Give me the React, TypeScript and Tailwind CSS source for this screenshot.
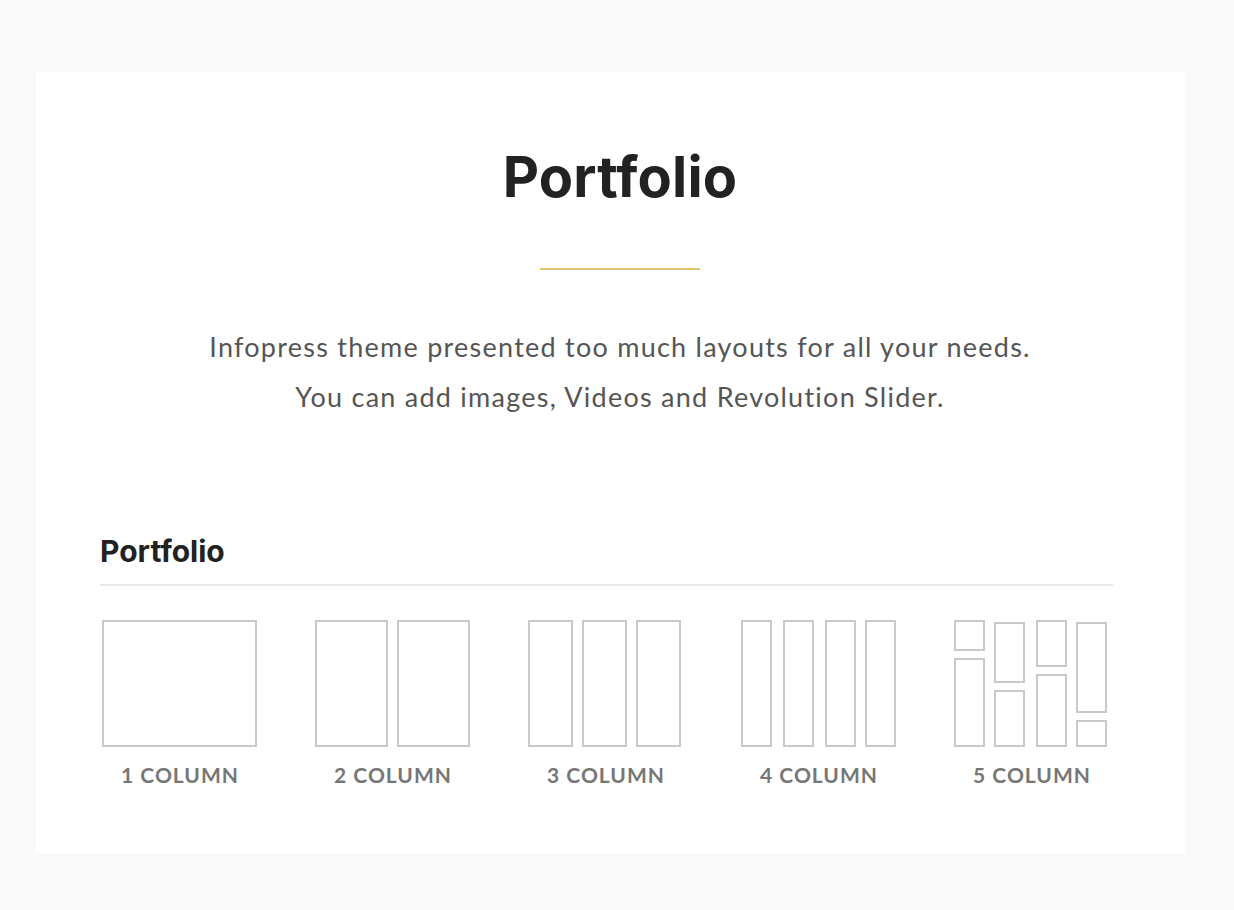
import React from "react";

type R = [number, number, number, number];

const icons: { label: string; rects: R[] }[] = [
  { label: "1 COLUMN", rects: [[0, 0, 155, 127]] },
  { label: "2 COLUMN", rects: [[0, 0, 73, 127], [82, 0, 73, 127]] },
  { label: "3 COLUMN", rects: [[0, 0, 45, 127], [54, 0, 45, 127], [108, 0, 45, 127]] },
  {
    label: "4 COLUMN",
    rects: [[0, 0, 31, 127], [42, 0, 31, 127], [84, 0, 31, 127], [124, 0, 31, 127]],
  },
  {
    label: "5 COLUMN",
    rects: [
      [0, 0, 31, 31],
      [0, 38, 31, 89],
      [40, 2, 31, 61],
      [40, 70, 31, 57],
      [82, 0, 31, 47],
      [82, 54, 31, 73],
      [122, 2, 31, 91],
      [122, 100, 31, 27],
    ],
  },
];

function Icon({ rects }: { rects: R[] }) {
  return (
    <svg width="156" height="128" viewBox="0 0 156 128" className="block">
      {rects.map(([x, y, w, h], i) => (
        <rect
          key={i}
          x={x + 1}
          y={y + 1}
          width={w - 2}
          height={h - 2}
          fill="none"
          stroke="#c9c9c9"
          strokeWidth="2"
        />
      ))}
    </svg>
  );
}

export default function App() {
  return (
    <div className="min-h-[910px] w-full bg-[#f9f9f9] pt-[72px] pl-[36px]">
      <div className="w-[1149px] h-[781px] bg-white pt-[77px]">
        <div className="pl-[19px]">
          <h1
            className="text-center text-[56px] leading-none font-bold text-[#222] tracking-[0.2px]"
            style={{ fontFamily: "Inter, 'Liberation Sans', sans-serif" }}
          >
            Portfolio
          </h1>
          <div className="mx-auto mt-[63px] h-[2px] w-[160px] bg-[#e0c56e]" />
          <p
            className="mt-[52px] text-center text-[27px] leading-[50px] text-[#555] tracking-[1.25px]"
            style={{ fontFamily: "Lato, 'Noto Sans', sans-serif" }}
          >
            Infopress theme presented too much layouts for all your needs.
            <br />
            You can add images, Videos and Revolution Slider.
          </p>
        </div>
        <div className="ml-[64px] w-[1013px] mt-[114px]">
          <h2
            className="text-[30px] leading-none font-bold text-[#222]"
            style={{ fontFamily: "Inter, 'Liberation Sans', sans-serif" }}
          >
            Portfolio
          </h2>
          <div className="mt-[18px] h-[2px] w-full bg-[#e8e8e8]" />
          <div className="mt-[34px] ml-[2px] flex gap-[57px]">
            {icons.map((ic) => (
              <div key={ic.label} className="flex w-[156px] flex-col items-center">
                <Icon rects={ic.rects} />
                <div
                  className="mt-[15px] text-[21px] leading-[24px] font-bold text-[#777] tracking-[1px] whitespace-nowrap"
                  style={{ fontFamily: "Lato, 'Noto Sans', sans-serif" }}
                >
                  {ic.label}
                </div>
              </div>
            ))}
          </div>
        </div>
      </div>
    </div>
  );
}
